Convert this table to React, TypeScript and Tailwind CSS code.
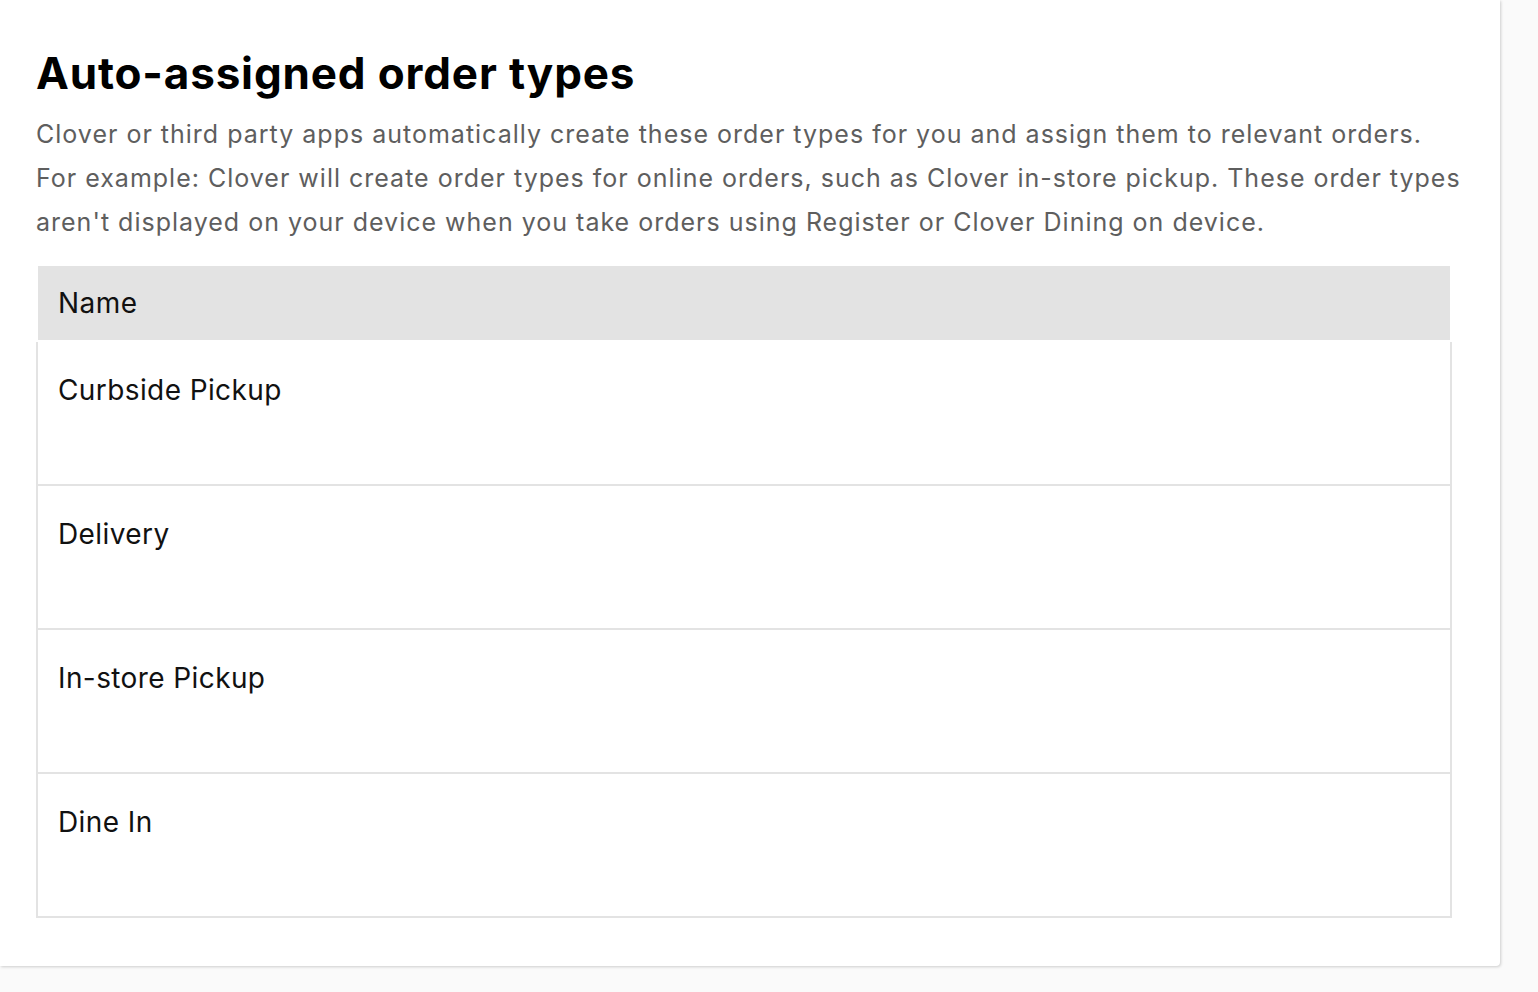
const orderTypes = ['Curbside Pickup', 'Delivery', 'In-store Pickup', 'Dine In'];

export default function App() {
  return (
    <div className="min-h-screen bg-[#fafafa] font-['Inter',sans-serif]">
      <section className="w-[1500px] rounded-br-[4px] bg-white pb-[48px] pl-[36px] pt-[47px] shadow-[1px_1px_3px_rgba(0,0,0,0.18)]">
        <h1 className="text-[44px] font-bold leading-[52px] tracking-[0.85px] text-black">
          Auto-assigned order types
        </h1>
        <p className="mt-[13px] w-[1426px] text-[25px] leading-[44px] tracking-[1px] text-[#5e5e5e]">
          Clover or third party apps automatically create these order types for you and assign them to relevant
          orders. For example: Clover will create order types for online orders, such as Clover in-store pickup.
          These order types aren't displayed on your device when you take orders using Register or Clover Dining on
          device.
        </p>

        <div className="mt-[22px] w-[1416px]">
          <div className="mx-[2px] flex h-[74px] items-center bg-[#e3e3e3] pl-[20px] text-[28px] tracking-[0.5px] text-[#111]">
            Name
          </div>
          <div className="mt-[2px] border-x-2 border-b-2 border-[#e3e3e3]">
            {orderTypes.map((name, i) => (
              <div
                key={name}
                className={`pl-[20px] pt-[30px] text-[28px] leading-[36px] tracking-[0.4px] text-[#111] ${
                  i > 0 ? 'h-[144px] border-t-2 border-[#e3e3e3]' : 'h-[142px]'
                }`}
              >
                {name}
              </div>
            ))}
          </div>
        </div>
      </section>
    </div>
  );
}
